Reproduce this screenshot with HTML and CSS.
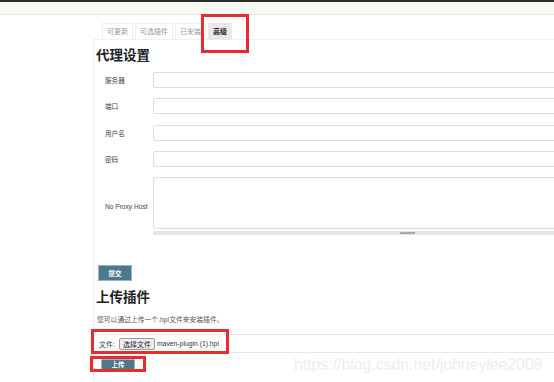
FILE: index.html
```html
<!DOCTYPE html>
<html>
<head>
  <title>插件管理 - 高级</title>
  <link rel="stylesheet" href="styles.css">
</head>
<body>

  <div class="topbar"></div>

  <div class="main">
    <div class="tabs">
      <div class="tab">可更新</div>
      <div class="tab">可选插件</div>
      <div class="tab">已安装</div>
      <div class="tab active">高级</div>
    </div>

    <div class="panel">
      <h2>代理设置</h2>

      <form class="proxy-form">
        <div class="row">
          <label>服务器</label>
          <input type="text" class="field">
        </div>
        <div class="row">
          <label>端口</label>
          <input type="text" class="field">
        </div>
        <div class="row">
          <label>用户名</label>
          <input type="text" class="field">
        </div>
        <div class="row">
          <label>密码</label>
          <input type="password" class="field">
        </div>
        <div class="row">
          <label>No Proxy Host</label>
          <div class="area-wrap">
            <textarea class="area"></textarea>
            <div class="grip"><span></span></div>
          </div>
        </div>

        <button type="button" class="btn submit">提交</button>
      </form>

      <h2 class="upload-title">上传插件</h2>
      <p class="desc">您可以通过上传一个.hpi文件来安装插件。</p>

      <div class="file-row">
        <span class="file-label">文件:</span>
        <span class="choose">选择文件</span>
        <span class="file-name">maven-plugin (1).hpi</span>
      </div>

      <button type="button" class="btn upload">上传</button>
    </div>
  </div>

  <!-- annotation boxes from the screenshot -->
  <div class="mark mark-tab"></div>
  <div class="mark mark-file"></div>
  <div class="mark mark-upload"></div>

  <div class="watermark">https://blog.csdn.net/johneylee2008</div>

</body>
</html>
```

FILE: styles.css
```css
html, body {
  overflow: hidden;
}

body {
  margin: 0;
  height: 382px;
  background: #fff;
  font-family: "Liberation Sans", "Noto Sans CJK SC", sans-serif;
  color: #333;
}

.topbar {
  height: 12px;
  border-top: 2px solid #2b2b2b;
  border-bottom: 1px solid #e4e7df;
  background: #f6f8f2;
}

.main {
  margin-left: 93px;
  overflow: hidden;
}

.tabs {
  display: flex;
  gap: 2px;
  margin-top: 8px;
  padding-left: 9px;
}

.tab {
  height: 17px;
  box-sizing: border-box;
  padding: 0 4px;
  border: 1px solid #eee;
  border-bottom: none;
  font-size: 7px;
  line-height: 16px;
  color: #999;
}

.tab.active {
  background: #e9e9e9;
  border-color: #e9e9e9;
  color: #222;
  font-weight: bold;
}

.panel {
  margin-top: -1px;
  border-top: 1px solid #f0f0f0;
  border-left: 1px solid #eee;
  padding-left: 2px;
  padding-top: 8px;
  height: 335px;
}

h2 {
  margin: 0;
  font-size: 13.5px;
  line-height: 16px;
  color: #222;
}

.proxy-form {
  margin-top: 8px;
  padding-left: 9px;
}

.row {
  display: grid;
  grid-template-columns: 48px 508px;
  align-items: center;
  margin-bottom: 10.3px;
}

.row label {
  font-size: 6.6px;
  color: #444;
}

.field {
  height: 16px;
  box-sizing: border-box;
  margin: 0;
  border: 1px solid #ddd;
  border-radius: 2px;
  padding: 0 4px;
}

.area-wrap {
  display: flex;
  flex-direction: column;
}

.area {
  height: 52px;
  box-sizing: border-box;
  margin: 0;
  border: 1px solid #ddd;
  border-radius: 2px;
  resize: none;
}

.grip {
  height: 4px;
  margin-top: 2px;
  background: #e6e6e6;
  display: flex;
  align-items: center;
}

.grip span {
  width: 15px;
  height: 2px;
  margin-left: 247px;
  background: #aaa;
}

.btn {
  display: block;
  width: 34px;
  height: 16px;
  padding: 0;
  border: 1px solid #9db4c0;
  background: #4b7a90;
  color: #fff;
  font-family: "Noto Sans CJK SC", sans-serif;
  font-size: 6.5px;
  font-weight: bold;
}

.submit {
  margin-top: 30px;
  margin-left: -7px;
}

.upload-title {
  margin-top: 9px;
}

.desc {
  margin: 8px 0 0 1px;
  font-size: 6.8px;
  line-height: 12px;
  color: #555;
}

.file-row {
  display: flex;
  align-items: center;
  height: 17px;
  margin-top: 8px;
  border-top: 1px solid #e8e8e8;
  border-bottom: 1px solid #e8e8e8;
  font-size: 7px;
  color: #444;
}

.file-label {
  margin-left: 3px;
}

.choose {
  margin-left: 4px;
  padding: 0 3px;
  height: 12px;
  line-height: 11px;
  box-sizing: border-box;
  border: 1px solid #999;
  border-radius: 2px;
  background: #efefef;
  color: #222;
}

.file-name {
  margin-left: 2px;
  font-size: 6.8px;
  color: #333;
}

.upload {
  margin-top: 6px;
  margin-left: 5px;
  height: 11px;
  line-height: 9px;
}

.mark {
  position: absolute;
  border: 3px solid #ec2a2c;
  box-sizing: border-box;
}

.mark-tab {
  left: 201px;
  top: 14px;
  width: 48px;
  height: 39px;
}

.mark-file {
  left: 91px;
  top: 329px;
  width: 138px;
  height: 25px;
}

.mark-upload {
  left: 90px;
  top: 356px;
  width: 56px;
  height: 16px;
}

.watermark {
  position: absolute;
  left: 294px;
  top: 356px;
  font-family: "Liberation Sans", sans-serif;
  font-size: 15.8px;
  color: #ededed;
  white-space: nowrap;
}
```
